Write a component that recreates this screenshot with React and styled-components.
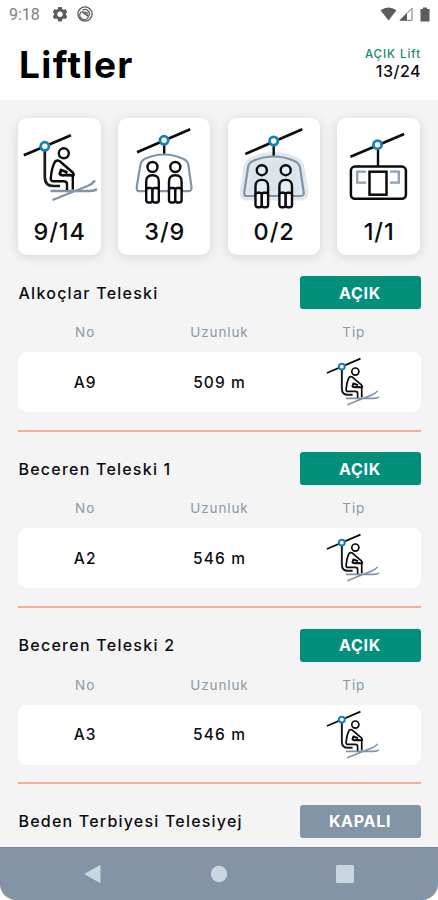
import React from 'react';
import styled, { createGlobalStyle } from 'styled-components';

const lifts = [
    { name: 'Alkoçlar Teleski', no: 'A9', length: '509 m', open: true, spacing: 1.25 },
    { name: 'Beceren Teleski 1', no: 'A2', length: '546 m', open: true, spacing: 1.22 },
    { name: 'Beceren Teleski 2', no: 'A3', length: '546 m', open: true, spacing: 1.26 },
    { name: 'Beden Terbiyesi Telesiyej', no: 'B1', length: '820 m', open: false, spacing: 1.2 },
];

const Cable = ({ x1, y1, x2, y2, cx, cy }) => (
    <>
        <path d={`M${x1} ${y1}L${x2} ${y2}`} stroke="#0b0b0d" strokeWidth="2.6" />
        <circle cx={cx} cy={cy} r="4.1" fill="#fff" stroke="#1683b5" strokeWidth="2.8" />
    </>
);

const Rider = ({ x, y, fill = '#fff', drop = 0 }) => (
    <g transform={`translate(${x} ${y})`} stroke="#0b0b12" strokeWidth="2.4" fill="none">
        <circle cx="0" cy="0" r="5" fill={fill} />
        <path d={`M-6.3 ${24 + drop}V${14.5 + drop}Q-6.3 ${8.2 + drop} 0 ${8.2 + drop}T6.3 ${14.5 + drop}V${24 + drop}`} fill={fill} />
        <rect x="-6.3" y={21 + drop} width="6.3" height="14.5" rx="2.2" fill="#fff" />
        <rect x="0" y={21 + drop} width="6.3" height="14.5" rx="2.2" fill="#fff" />
    </g>
);

const SkiLiftDrawing = () => (
    <g fill="none" strokeLinecap="butt" strokeLinejoin="round">
        <path d="M50 81H89Q94 81 96.5 79M52 90L87 76Q92 74 94.5 70.5" stroke="#8294a5" strokeWidth="2.3" />
        <path d="M44.3 40V67Q44.3 76 53 76H59.5" stroke="#15191e" strokeWidth="2.7" />
        <g stroke="#0b0b0d" strokeWidth="2.4">
            <circle cx="63.3" cy="43.3" r="5" />
            <path d="M66.5 80V74Q66.5 71.3 63 71.3H53Q50 71.3 50.3 68Q51 59 53.8 53Q55.5 49.5 59 51L72.3 62.5Q74 64.7 72.3 66.3V79.5" />
            <path d="M72.5 65.3L65 65Q61 66 59.3 64L60.5 60L67 62.5" strokeWidth="2.8" />
        </g>
        <Cable x1={23.3} y1={45.3} x2={70.5} y2={25.2} cx={44.3} cy={36.3} />
    </g>
);

const SkiLiftIcon = () => (
    <svg width="83.5" height="97" viewBox="17.5 8 83.5 97"><SkiLiftDrawing /></svg>
);

const ChairIcon = () => (
    <svg width="92" height="97" viewBox="8.5 8 92 97" fill="none">
        <path d="M54.7 34V44" stroke="#0b0b0d" strokeWidth="2.4" />
        <path d="M29 81.2Q27 81 27.3 76.5L31 54.5Q31.7 50.5 36 48.5Q54.5 40.5 73 48.5Q78 50.5 78.8 54.5L82 77Q82.2 81.2 79 81.2Z" stroke="#8294a5" strokeWidth="2.2" />
        <Rider x={43} y={57} />
        <Rider x={65.8} y={57} />
        <Cable x1={27.5} y1={42.3} x2={80.7} y2={19.2} cx={54.6} cy={30.3} />
    </svg>
);

const BubbleIcon = () => (
    <svg width="92" height="97" viewBox="8 8 92 97" fill="none">
        <path d="M26 86Q24 86 24.3 82L28 57.5Q28.7 53 33 51Q53.7 42 74.5 51Q79 53 80 57.5L83.7 82Q84 86 81 86Z" fill="#dce4eb" stroke="#e0e7ed" strokeWidth="9" strokeLinejoin="round" />
        <path d="M53.7 34V46" stroke="#0b0b0d" strokeWidth="2.4" />
        <path d="M26 86Q24 86 24.3 82L28 57.5Q28.7 53 33 51Q53.7 42 74.5 51Q79 53 80 57.5L83.7 82Q84 86 81 86Z" stroke="#8294a5" strokeWidth="2.2" />
        <Rider x={41.8} y={60.2} fill="#e6ecf1" drop={1.5} />
        <Rider x={65.7} y={60.2} fill="#e6ecf1" drop={1.5} />
        <Cable x1={25.3} y1={44} x2={82.3} y2={19.2} cx={53.7} cy={31} />
    </svg>
);

const GondolaIcon = () => (
    <svg width="83.5" height="97" viewBox="9.5 8 83.5 97" fill="none">
        <path d="M50.5 38V56" stroke="#0b0b0d" strokeWidth="2.4" />
        <path d="M38.5 61.7H29.7V72.7H38.5M62.5 61.7H71.3V72.7H62.5" stroke="#8fa0b0" strokeWidth="2.3" />
        <rect x="23.4" y="56.6" width="55" height="32.2" rx="4" stroke="#0b0b0d" strokeWidth="2.5" />
        <rect x="42" y="61.7" width="17" height="23" stroke="#0b0b0d" strokeWidth="2.5" />
        <Cable x1={23} y1={46.7} x2={76.7} y2={24} cx={50} cy={34.7} />
    </svg>
);

const summary = [
    { Icon: SkiLiftIcon, count: '9/14', width: 83.5 },
    { Icon: ChairIcon, count: '3/9', width: 92 },
    { Icon: BubbleIcon, count: '0/2', width: 92 },
    { Icon: GondolaIcon, count: '1/1', width: 83.5 },
];

const App = () => (
    <>
        <GlobalStyle />
        <Screen>
            <StatusBar>
                <Clock>9:18</Clock>
                <svg width="14" height="16" viewBox="0 0 14 16">
                    <path d="M5.3 1h3.4l.5 2 1.5.8 2-.5 1.6 2.9-1.5 1.4v1.2l1.5 1.4-1.6 2.9-2-.5-1.5.8-.5 2H5.3l-.5-2-1.5-.8-2 .5-1.6-2.9 1.5-1.4V7.6L-.3 6.2l1.6-2.9 2 .5L4.8 3z" fill="#5c5c5c" />
                    <circle cx="7" cy="8.2" r="2.7" fill="#fff" />
                </svg>
                <svg width="16" height="16" viewBox="0 0 16 16" fill="none" stroke="#5c5c5c">
                    <circle cx="8" cy="8" r="7.1" strokeWidth="1.3" />
                    <path d="M4.2 5.7A4.6 4.6 0 1 0 11.5 11M5.7 4.1A4.6 4.6 0 0 1 12.2 9.8" strokeWidth="1.2" />
                    <path d="M4.8 5.3L11.8 10.7" strokeWidth="1.5" />
                    <path d="M7 6.2L10 6.5V9" strokeWidth="1.2" />
                </svg>
                <Spacer />
                <svg width="17" height="14" viewBox="0 0 17 14"><path d="M.5 3.2Q8.5-2.2 16.5 3.2L8.5 13.6z" fill="#5c5c5c" /></svg>
                <svg width="14" height="14" viewBox="0 0 14 14">
                    <path d="M1.2 13.3L13 1.2V13.3z" fill="none" stroke="#777" />
                    <path d="M.5 13.6L8 6V13.6z" fill="#5c5c5c" />
                </svg>
                <svg width="10" height="15" viewBox="0 0 10 15"><path d="M3 .5h4V2h2.5v12.5h-9V2H3z" fill="#5c5c5c" /></svg>
            </StatusBar>
            <Header>
                <Title>Liftler</Title>
                <Totals>
                    <TotalLabel>AÇIK Lift</TotalLabel>
                    <TotalCount>13/24</TotalCount>
                </Totals>
            </Header>
            <Content>
                <SummaryRow>
                    {summary.map(({ Icon, count, width }) => (
                        <SummaryCard key={count} $width={width}>
                            <Icon />
                            <Count>{count}</Count>
                        </SummaryCard>
                    ))}
                </SummaryRow>
                {lifts.map(lift => (
                    <LiftSection key={lift.name}>
                        <LiftHeader>
                            <LiftName $spacing={lift.spacing}>{lift.name}</LiftName>
                            <StatusButton $open={lift.open}>{lift.open ? 'AÇIK' : 'KAPALI'}</StatusButton>
                        </LiftHeader>
                        {lift.open && (
                            <>
                                <Labels>
                                    <span>No</span>
                                    <span>Uzunluk</span>
                                    <span>Tip</span>
                                </Labels>
                                <Details>
                                    <span>{lift.no}</span>
                                    <span>{lift.length}</span>
                                    <svg width="54" height="50" viewBox="22 23 76 70"><SkiLiftDrawing /></svg>
                                </Details>
                            </>
                        )}
                    </LiftSection>
                ))}
            </Content>
            <NavBar>
                <svg width="18" height="20" viewBox="0 0 18 20"><path d="M1 10L16 1.5V18.5z" fill="#cad6e0" stroke="#cad6e0" strokeLinejoin="round" /></svg>
                <svg width="18" height="18" viewBox="0 0 18 18"><circle cx="9" cy="9" r="8.2" fill="#cad6e0" /></svg>
                <svg width="18" height="18" viewBox="0 0 18 18"><rect width="18" height="18" rx="1.5" fill="#cad6e0" /></svg>
            </NavBar>
        </Screen>
    </>
);

const GlobalStyle = createGlobalStyle`
    * {
        box-sizing: border-box;
    }
    body {
        margin: 0;
        background: #fff;
        font-family: Inter, "Liberation Sans", sans-serif;
        color: #0c0c0e;
    }
    svg {
        display: block;
        flex-shrink: 0;
    }
`;

const Screen = styled.div`
    display: flex;
    flex-direction: column;
    width: 438px;
    height: 900px;
    overflow: hidden;
    background: #fff;
`;

const StatusBar = styled.div`
    display: flex;
    align-items: center;
    height: 28px;
    padding: 0 8px 0 9px;
    flex-shrink: 0;

    svg:nth-of-type(2) {
        margin-left: 10px;
    }
    svg:nth-of-type(4) {
        margin: 0 7px 0 2px;
    }
`;

const Clock = styled.span`
    width: 44px;
    font-family: Roboto, sans-serif;
    font-size: 16px;
    color: #808080;
`;

const Spacer = styled.div`
    flex: 1;
`;

const Header = styled.header`
    display: flex;
    justify-content: space-between;
    align-items: flex-start;
    height: 72px;
    padding: 0 17px 0 19px;
    flex-shrink: 0;
`;

const Title = styled.h1`
    margin: 15px 0 0;
    font-size: 37px;
    line-height: 44px;
    font-weight: 700;
    letter-spacing: 1.4px;
    color: #000;
`;

const Totals = styled.div`
    margin-top: 19px;
    text-align: right;
`;

const TotalLabel = styled.div`
    font-size: 11.5px;
    line-height: 15px;
    letter-spacing: 0.95px;
    font-weight: 500;
    color: #168a70;
`;

const TotalCount = styled.div`
    font-size: 16px;
    line-height: 18px;
    letter-spacing: 0.5px;
    font-weight: 500;
`;

const Content = styled.main`
    flex: 1;
    min-height: 0;
    overflow: hidden;
    padding: 18px 17.5px 0;
    background: #f4f4f5;
`;

const SummaryRow = styled.div`
    display: flex;
    justify-content: space-between;
    margin-bottom: 21px;
`;

const SummaryCard = styled.div`
    display: flex;
    flex-direction: column;
    width: ${props => props.$width}px;
    height: 137px;
    border-radius: 9px;
    background: #fff;
    box-shadow: 0 2px 12px rgba(0, 0, 0, 0.13);
`;

const Count = styled.div`
    height: 33px;
    line-height: 33px;
    text-align: center;
    font-size: 23.5px;
    font-weight: 500;
    letter-spacing: 0.9px;
    text-indent: 0.9px;
`;

const LiftSection = styled.section`
    height: 155.5px;
    margin-bottom: 20.8px;
    border-bottom: 2px solid #f4ab9b;
`;

const LiftHeader = styled.div`
    display: flex;
    justify-content: space-between;
    align-items: center;
    height: 33px;
`;

const LiftName = styled.div`
    padding-left: 1px;
    font-size: 16px;
    font-weight: 500;
    letter-spacing: ${props => props.$spacing}px;
`;

const StatusButton = styled.button`
    width: 121px;
    height: 33px;
    padding: 0;
    border: 0;
    border-radius: 3px;
    background: ${props => (props.$open ? '#008f7b' : '#8294a5')};
    color: #fff;
    font-family: inherit;
    font-size: 16px;
    font-weight: 700;
    letter-spacing: 0.7px;
`;

const Labels = styled.div`
    display: grid;
    grid-template-columns: repeat(3, 1fr);
    justify-items: center;
    align-items: center;
    height: 43px;
    padding-top: 3px;
    font-size: 13.5px;
    letter-spacing: 0.9px;
    text-indent: 0.9px;
    color: #8999a7;
`;

const Details = styled.div`
    display: grid;
    grid-template-columns: repeat(3, 1fr);
    justify-items: center;
    align-items: center;
    height: 60px;
    border-radius: 9px;
    background: #fff;
    font-size: 15.5px;
    font-weight: 500;
    letter-spacing: 1.1px;
    text-indent: 1.1px;
`;

const NavBar = styled.nav`
    display: grid;
    grid-template-columns: repeat(3, 126px);
    justify-content: center;
    justify-items: center;
    align-items: center;
    height: 53px;
    flex-shrink: 0;
    border-top: 1px solid #77899a;
    border-radius: 0 0 16px 16px;
    background: #8294a5;
`;

export default App;
